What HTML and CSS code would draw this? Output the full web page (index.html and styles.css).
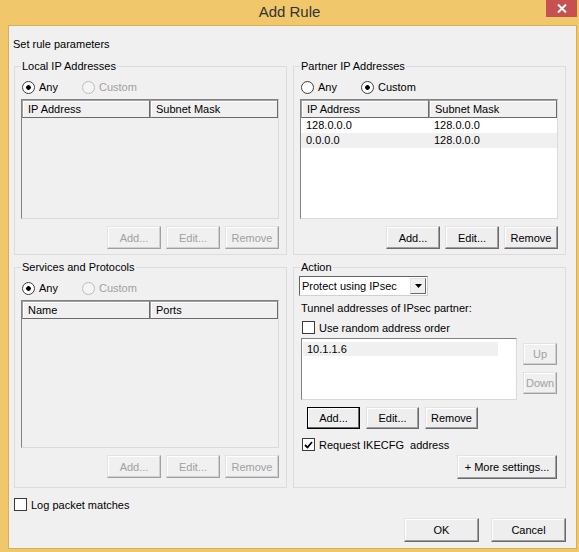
FILE: index.html
```html
<!DOCTYPE html>
<html lang="en">
  <head>
    <meta charset="UTF-8" />
    <title>Add Rule</title>
    <link rel="stylesheet" href="styles.css">
  </head>
  <body>
    <div class="titlebar">
      <span class="title">Add Rule</span>
      <span class="close">
        <svg width="10" height="9" viewBox="0 0 10 9"><path d="M1 0.5 L9 8.5 M9 0.5 L1 8.5" stroke="#fff" stroke-width="2"/></svg>
      </span>
    </div>

    <div class="window">
      <p class="heading">Set rule parameters</p>

      <div class="groups">
        <!-- Local IP -->
        <section class="group">
          <span class="legend">Local IP Addresses</span>
          <div class="radios">
            <span class="radio checked">Any</span>
            <span class="radio disabled">Custom</span>
          </div>
          <div class="listview disabled">
            <div class="lv-head"><span>IP Address</span><span>Subnet Mask</span></div>
          </div>
          <div class="btn-row">
            <button class="btn" disabled>Add...</button>
            <button class="btn" disabled>Edit...</button>
            <button class="btn" disabled>Remove</button>
          </div>
        </section>

        <!-- Partner IP -->
        <section class="group">
          <span class="legend">Partner IP Addresses</span>
          <div class="radios">
            <span class="radio">Any</span>
            <span class="radio checked">Custom</span>
          </div>
          <div class="listview">
            <div class="lv-head"><span>IP Address</span><span>Subnet Mask</span></div>
            <div class="lv-row"><span>128.0.0.0</span><span>128.0.0.0</span></div>
            <div class="lv-row alt"><span>0.0.0.0</span><span>128.0.0.0</span></div>
          </div>
          <div class="btn-row">
            <button class="btn">Add...</button>
            <button class="btn">Edit...</button>
            <button class="btn">Remove</button>
          </div>
        </section>

        <!-- Services -->
        <section class="group">
          <span class="legend">Services and Protocols</span>
          <div class="radios">
            <span class="radio checked">Any</span>
            <span class="radio disabled">Custom</span>
          </div>
          <div class="listview disabled tall">
            <div class="lv-head"><span>Name</span><span>Ports</span></div>
          </div>
          <div class="btn-row">
            <button class="btn" disabled>Add...</button>
            <button class="btn" disabled>Edit...</button>
            <button class="btn" disabled>Remove</button>
          </div>
        </section>

        <!-- Action -->
        <section class="group action">
          <span class="legend">Action</span>
          <div class="combo">
            <span class="combo-text">Protect using IPsec</span>
            <span class="combo-arrow">
              <svg width="7" height="4" viewBox="0 0 7 4"><path d="M0 0 H7 L3.5 4 Z" fill="#000"/></svg>
            </span>
          </div>
          <p class="note">Tunnel addresses of IPsec partner:</p>
          <div class="check"><span class="box"></span>Use random address order</div>
          <div class="addr-row">
            <div class="addr-list">
              <div class="addr-item">10.1.1.6</div>
            </div>
            <div class="updown">
              <button class="btn" disabled>Up</button>
              <button class="btn" disabled>Down</button>
            </div>
          </div>
          <div class="btn-row left">
            <button class="btn default">Add...</button>
            <button class="btn">Edit...</button>
            <button class="btn">Remove</button>
          </div>
          <div class="check checked-row">
            <span class="box">
              <svg width="9" height="8" viewBox="0 0 9 8"><path d="M1 4 L3.5 6.5 L8 1" stroke="#000" stroke-width="1.8" fill="none"/></svg>
            </span>Request IKECFG&nbsp; address
          </div>
          <button class="btn more">+ More settings...</button>
        </section>
      </div>

      <div class="footer">
        <div class="check"><span class="box"></span>Log packet matches</div>
        <div class="dialog-buttons">
          <button class="btn big">OK</button>
          <button class="btn big">Cancel</button>
        </div>
      </div>
    </div>
  </body>
</html>
```

FILE: styles.css
```css
:root {
  --frame: #f0c86b;
  --frame-dark: #d8ae56;
  --panel: #f0f0f0;
  --group-line: #dcdcdc;
  --disabled: #a0a0a0;
}

body {
  margin: 0;
  width: 579px;
  height: 552px;
  overflow: hidden;
  display: flex;
  flex-direction: column;
  background: var(--frame);
  font: 11px "Liberation Sans", Arial, sans-serif;
  color: #000;
}

p {
  margin: 0;
}

/* title bar */
.titlebar {
  position: relative;
  height: 25px;
  display: flex;
  align-items: center;
  justify-content: center;
}

.title {
  font-size: 15px;
  color: #333;
  margin-top: -3px;
}

.close {
  position: absolute;
  top: 0;
  right: 2px;
  width: 31px;
  height: 17px;
  background: #c75050;
  display: flex;
  align-items: center;
  justify-content: center;
}

.window {
  flex: 1;
  margin: 0 2px 3px 8px;
  border: 1px solid var(--frame-dark);
  background: var(--panel);
}

.heading {
  margin: 11px 0 0 4px;
  line-height: 15px;
}

.groups {
  display: grid;
  grid-template-columns: 273px 273px;
  grid-template-rows: 189px 221px;
  column-gap: 6px;
  row-gap: 12px;
  margin: 14px 0 0 5px;
}

.group {
  position: relative;
  border: 1px solid var(--group-line);
  padding: 14px 7px 0 6px;
  display: flex;
  flex-direction: column;
}

.legend {
  position: absolute;
  top: -8px;
  left: 6px;
  padding: 0 1px;
  line-height: 15px;
  background: var(--panel);
}

/* radios */
.radios {
  display: flex;
  height: 13px;
  margin-left: 1px;
}

.radio {
  display: flex;
  align-items: center;
  gap: 4px;
  width: 60px;
  line-height: 13px;
}
.radio::before {
  content: "";
  box-sizing: border-box;
  width: 13px;
  height: 13px;
  border: 1px solid #3c3c3c;
  border-radius: 50%;
  background: #fff;
}
.radio.checked::before {
  background: radial-gradient(circle, #000 0 2px, #fff 2.6px);
}
.radio.disabled {
  color: var(--disabled);
}
.radio.disabled::before {
  border-color: #bcbcbc;
  background: #f4f4f4;
}

/* list views */
.listview {
  margin-top: 5px;
  height: 120px;
  box-sizing: border-box;
  border: 1px solid #828282;
  border-right-color: #dadada;
  border-bottom-color: #dadada;
  background: #fff;
}
.listview.disabled {
  background: var(--panel);
}
.listview.tall {
  height: 148px;
}

.lv-head,
.lv-row {
  display: grid;
  grid-template-columns: 128px 1fr;
}

.lv-head span {
  height: 18px;
  box-sizing: border-box;
  border: 1px solid #a0a0a0;
  border-right-color: #696969;
  border-bottom-color: #696969;
  box-shadow: inset 1px 1px #fff;
  background: var(--panel);
  padding-left: 5px;
  line-height: 16px;
}

.lv-row {
  height: 15px;
  line-height: 15px;
}
.lv-row span {
  padding-left: 5px;
}
.lv-row.alt {
  background: var(--panel);
}

/* buttons */
.btn {
  box-sizing: border-box;
  width: 54px;
  height: 23px;
  padding: 0;
  font: inherit;
  color: #000;
  background: #eeeeee;
  border: 1px solid;
  border-color: #e3e3e3 #696969 #696969 #e3e3e3;
  box-shadow: inset -1px -1px #a0a0a0, inset 1px 1px #fff;
}
.btn:disabled {
  color: var(--disabled);
  background: var(--panel);
  border-color: #e3e3e3 #a0a0a0 #a0a0a0 #e3e3e3;
  box-shadow: inset -1px -1px #d0d0d0, inset 1px 1px #fff;
}
.btn.default {
  border-color: #000;
  box-shadow: inset -1px -1px #696969, inset 1px 1px #fff;
}

.btn-row {
  display: flex;
  justify-content: flex-end;
  gap: 5px;
  margin-top: 7px;
}

/* action group: children are placed from the border edge */
.group.action {
  padding: 0;
}

.combo {
  box-sizing: border-box;
  width: 129px;
  height: 20px;
  margin: 8px 0 0 5px;
  padding: 1px;
  display: flex;
  align-items: center;
  border: 1px solid #646464;
  border-right-color: #d0d0d0;
  border-bottom-color: #d0d0d0;
  background: #fff;
}
.combo-text {
  flex: 1;
  padding-left: 1px;
}
.combo-arrow {
  box-sizing: border-box;
  width: 16px;
  height: 16px;
  display: flex;
  align-items: center;
  justify-content: center;
  background: var(--panel);
  border: 1px solid;
  border-color: #e3e3e3 #696969 #696969 #e3e3e3;
}

.note {
  margin: 5px 0 0 7px;
  line-height: 15px;
}

.check {
  display: flex;
  align-items: center;
  gap: 4px;
  height: 13px;
  margin: 5px 0 0 8px;
}
.box {
  box-sizing: border-box;
  width: 13px;
  height: 13px;
  border: 1px solid #3c3c3c;
  background: #fff;
  display: flex;
  align-items: center;
  justify-content: center;
}

.addr-row {
  display: flex;
  gap: 6px;
  margin: 4px 0 0 7px;
}
.addr-list {
  box-sizing: border-box;
  width: 216px;
  height: 62px;
  padding: 3px 0 0 1px;
  border: 1px solid #828282;
  border-right-color: #dadada;
  border-bottom-color: #dadada;
  background: #fff;
}
.addr-item {
  width: 195px;
  height: 14px;
  line-height: 14px;
  padding-left: 4px;
  box-sizing: border-box;
  background: var(--panel);
}
.updown {
  display: flex;
  flex-direction: column;
  gap: 7px;
  padding-top: 5px;
}
.updown .btn {
  width: 34px;
  height: 22px;
}

.btn-row.left {
  justify-content: flex-start;
  gap: 6px;
  margin: 7px 0 0 13px;
}
.btn-row.left .btn {
  width: 53px;
  height: 22px;
}

.checked-row {
  margin-top: 9px;
}

.btn.more {
  align-self: flex-end;
  width: 100px;
  height: 24px;
  margin: 4px 8px 0 0;
}

/* footer */
.footer {
  margin: 10px 10px 0 5px;
}
.footer .check {
  margin: 0;
}
.dialog-buttons {
  display: flex;
  justify-content: flex-end;
  gap: 12px;
  margin-top: 7px;
}
.btn.big {
  width: 75px;
  height: 24px;
}
```
